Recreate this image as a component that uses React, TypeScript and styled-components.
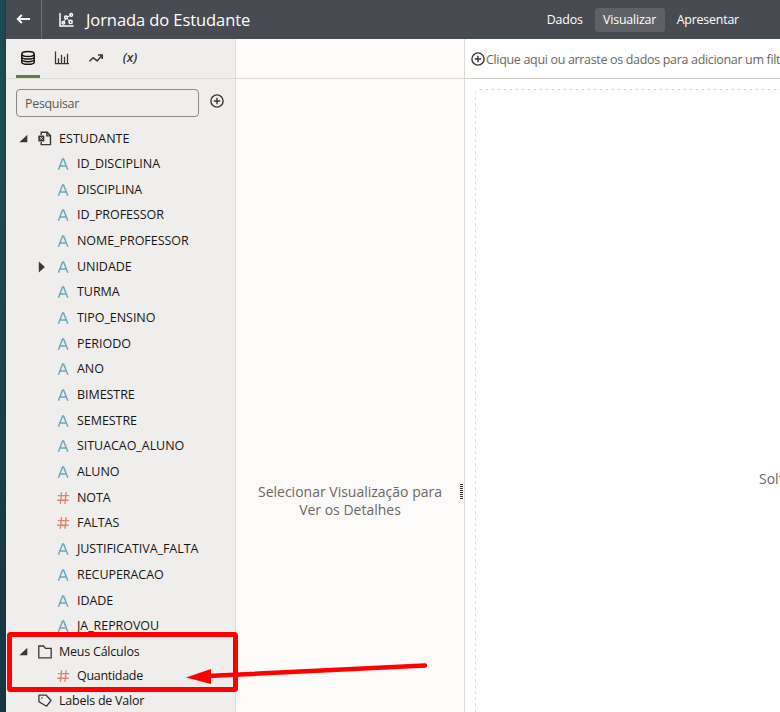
import React from 'react';
import styled, { createGlobalStyle } from 'styled-components';

const GlobalStyle = createGlobalStyle`
  *, *::before, *::after { box-sizing: border-box; }
  body { margin: 0; overflow: hidden; background: #fff; }
  svg { display: block; flex: none; }
`;

const Window = styled.div`
  position: relative;
  display: flex;
  width: 780px;
  height: 712px;
  overflow: hidden;
  font-family: "Open Sans", "Noto Sans", sans-serif;
  font-size: 12.5px;
  color: #161513;
  white-space: nowrap;
`;
const DesktopEdge = styled.div`
  flex: none;
  width: 6px;
  background: linear-gradient(90deg, transparent 4px, #15303a99 6px),
    linear-gradient(#1c4a50, #1f4c55 15%, #1b4049 60%, #17363f);
`;
const Shell = styled.div`
  flex: 1;
  min-width: 0;
  display: flex;
  flex-direction: column;
`;
const Header = styled.header`
  flex: none;
  display: flex;
  align-items: center;
  height: 39px;
  background: #494b53;
  color: #fff;
`;
const BackButton = styled.button`
  display: flex;
  align-items: center;
  width: 36px;
  height: 39px;
  padding: 0 0 1px 10px;
  border: 0;
  border-right: 1px solid #6c6e75;
  background: none;
  color: #fff;
`;
const Title = styled.h1`
  flex: 1;
  display: flex;
  align-items: center;
  gap: 12px;
  margin: 0;
  padding-left: 17px;
  font-size: 16.5px;
  font-weight: 400;
  letter-spacing: -0.08px;
  line-height: 39px;
`;
const ModeTabs = styled.nav`
  display: flex;
  gap: 4px;
  margin-right: 33px;
`;
const ModeTab = styled.button<{ $active?: boolean }>`
  height: 24px;
  padding: 0 8px;
  border: 0;
  border-radius: 3px;
  background: ${(p) => (p.$active ? '#5f6166' : 'transparent')};
  color: #fff;
  font: 500 12.4px/24px "Open Sans", "Noto Sans", sans-serif;
  letter-spacing: -0.19px;
  ${(p) => p.$active && 'width: 70px;'}
`;
const Body = styled.div`
  flex: 1;
  min-height: 0;
  display: flex;
`;
const DataPanel = styled.aside`
  flex: none;
  display: flex;
  flex-direction: column;
  width: 230px;
  border-right: 1px solid #dedcd9;
  background: #f0eeec;
`;
const PanelTabs = styled.div`
  flex: none;
  display: flex;
  gap: 10px;
  height: 40px;
  padding-left: 10px;
  border-bottom: 1px solid #dfddda;
`;
const PanelTab = styled.button<{ $active?: boolean }>`
  display: flex;
  justify-content: center;
  width: 24px;
  height: 39px;
  padding: 11px 0 0;
  border: 0;
  border-bottom: 3px solid ${(p) => (p.$active ? '#5f7d4f' : 'transparent')};
  background: none;
  color: ${(p) => (p.$active ? '#161513' : '#3a3632')};
`;
const Formula = styled.span`
  margin-top: -2px;
  font: italic 600 13px/18px "Open Sans", "Noto Sans", sans-serif;
`;
const SearchRow = styled.div`
  flex: none;
  display: flex;
  align-items: flex-start;
  gap: 11px;
  height: 47px;
  padding: 10px 0 0 10px;
`;
const SearchBox = styled.div`
  width: 183px;
  height: 28px;
  padding-left: 8px;
  border: 1px solid #8b8782;
  border-radius: 4px;
  color: #5b5753;
  line-height: 28px;
  letter-spacing: -0.33px;
`;
const AddButton = styled.button`
  padding: 5px 0 0;
  border: 0;
  background: none;
  color: #3a3632;
`;
const Tree = styled.div`
  flex: 1;
  min-height: 0;
  overflow: hidden;
`;
const GroupRow = styled.div<{ $tight?: boolean }>`
  display: grid;
  grid-template-columns: 22px 18px 1fr;
  align-items: center;
  height: 25px;
  padding-left: 13px;
  letter-spacing: ${(p) => (p.$tight ? '-0.23px' : '0.06px')};
`;
const GroupIcon = styled.span`
  margin-left: -3px;
`;
const Name = styled.span`
  line-height: 18px;
`;
const FieldRow = styled.div<{ $tight?: boolean }>`
  display: grid;
  grid-template-columns: 18px 20px 1fr;
  align-items: center;
  height: ${(p) => (p.$tight ? '24.6px' : '25.7px')};
  padding-left: 33px;
  letter-spacing: ${(p) => (p.$tight ? '-0.3px' : '-0.05px')};
`;
const ToggleSlot = styled.span`
  margin-left: -1px;
`;
const DetailsPanel = styled.section`
  flex: none;
  display: flex;
  flex-direction: column;
  width: 229px;
  border-right: 1px solid #dedcd9;
  background: #fcfbfa;
`;
const DetailsBar = styled.div`
  flex: none;
  height: 40px;
  border-bottom: 1px solid #dfddda;
`;
const DetailsContent = styled.div`
  flex: 1;
  display: flex;
  align-items: flex-start;
  padding-top: 404px;
`;
const DetailsHint = styled.p`
  flex: 1;
  margin: 0;
  text-align: center;
  font-size: 14px;
  line-height: 18px;
  color: #6b6762;
`;
const Gripper = styled.div`
  width: 3px;
  height: 15px;
  margin: 1px 1px 0 -4px;
  background: repeating-linear-gradient(#3a3632 0 1px, transparent 1px 2px);
`;
const Canvas = styled.main`
  flex: 1;
  min-width: 0;
  display: flex;
  flex-direction: column;
  background: #fff;
`;
const FilterBar = styled.div`
  flex: none;
  display: flex;
  align-items: center;
  gap: 1px;
  height: 40px;
  padding-left: 6px;
  border-bottom: 1px solid #d2cfc7;
  color: #6b6762;
  font-size: 12.5px;
  letter-spacing: -0.33px;
`;
const FilterIcon = styled.span`
  color: #3a3632;
`;
const FilterText = styled.span`
  padding-top: 2px;
`;
const DropZone = styled.div`
  flex: 1;
  margin: 10px -12px -12px 10px;
  overflow: hidden;
`;
const DropFrame = styled.svg`
  width: 317px;
  height: 635px;
`;
const DropHint = styled.div`
  margin: -255px 0 0 284px;
  font-size: 14px;
  line-height: 20px;
  color: #6b6762;
`;
const Annotation = styled.svg`
  position: absolute;
  left: 0;
  top: 0;
  pointer-events: none;
`;

const BackIcon = () => (
  <svg width="15" height="12" viewBox="0 0 15 12" fill="none" stroke="currentColor" strokeWidth="1.8">
    <path d="M14 6H1.8M5.8 2 1.7 6l4.1 4" />
  </svg>
);
const ScatterIcon = () => (
  <svg width="15" height="16" viewBox="0 0 15 16" fill="none" stroke="#fff" strokeWidth="1.5">
    <path d="M1 1v13H14.6" />
    <path d="m4.6 10.6 2.2-4M8.3 6.6l2.4 2.8M8.4 5 11 3.6" strokeWidth="1" />
    <circle cx="4.4" cy="10.8" r="1.3" />
    <circle cx="7" cy="5.4" r="1.4" />
    <circle cx="12.2" cy="2.9" r="1.3" />
    <circle cx="11.6" cy="9.9" r="1.6" />
  </svg>
);
const DatabaseIcon = () => (
  <svg width="16" height="16" viewBox="0 0 16 16" fill="none" stroke="currentColor" strokeWidth="1.5">
    <ellipse cx="8" cy="4.1" rx="6.2" ry="2.5" />
    <path d="M1.8 4.1v7.8c0 1.4 2.8 2.4 6.2 2.4s6.2-1 6.2-2.4V4.1M1.8 6.7C1.8 8 4.6 9.1 8 9.1s6.2-1.1 6.2-2.4M1.8 9.3c0 1.3 2.8 2.4 6.2 2.4s6.2-1.1 6.2-2.4" />
  </svg>
);
const BarsIcon = () => (
  <svg width="16" height="16" viewBox="0 0 16 16" fill="none" stroke="currentColor" strokeWidth="1.3">
    <path d="M1.5 1.4v12.3H15M4.5 14V8.2M7.5 14V4.8M10.5 14V6.8M13.5 14V3.8" />
  </svg>
);
const TrendIcon = () => (
  <svg width="16" height="16" viewBox="0 0 16 16" fill="none" stroke="currentColor" strokeWidth="1.5">
    <path d="m1.5 11.2 3.7-3.5 4 3.2L14 5.2M10 5h4.2v4" />
  </svg>
);
const CirclePlus = () => (
  <svg width="14" height="14" viewBox="0 0 14 14" fill="none" stroke="currentColor" strokeWidth="1.4">
    <circle cx="7" cy="7" r="6.1" />
    <path d="M7 3.8v6.4M3.8 7h6.4" />
  </svg>
);
const ExpandedIcon = () => (
  <svg width="9" height="9" viewBox="0 0 9 9" fill="#3a3632"><path d="M8.3.7v7.6H.4z" /></svg>
);
const CollapsedIcon = () => (
  <svg width="8" height="12" viewBox="0 0 8 12" fill="#3a3632"><path d="M.8.6 6.9 6 .8 11.4z" /></svg>
);
const ExcelFileIcon = () => (
  <svg width="14" height="15" viewBox="0 0 14 15" fill="none" stroke="#3a3632" strokeWidth="1.4">
    <path d="M3.2 4V1.3h6l3.3 3.3v9H3.2V11M8.9 1.5v3.4h3.5" />
    <rect x=".3" y="4.4" width="6" height="6" rx=".5" fill="#3a3632" stroke="none" />
    <path d="m2 6.1 2.6 2.6M4.6 6.1 2 8.7" stroke="#f0eeec" strokeWidth=".9" />
  </svg>
);
const FolderIcon = () => (
  <svg width="14" height="14" viewBox="0 0 14 14" fill="none" stroke="#3a3632" strokeWidth="1.3">
    <path d="M.8 12.8V1h4.7l2 2.4h5.7v9.4z" />
  </svg>
);
const TagIcon = () => (
  <svg width="14" height="14" viewBox="0 0 14 14" fill="none" stroke="#3a3632" strokeWidth="1.3">
    <path d="M.9 1.2h7.3L13 6.5l-4.4 5.7L.9 7.8z" strokeLinejoin="round" />
    <circle cx="4" cy="4" r=".8" fill="#3a3632" stroke="none" />
  </svg>
);
const AttributeIcon = () => (
  <svg width="13" height="12" viewBox="0 0 13 12" fill="none" stroke="#6fa5bd" strokeWidth="1.5">
    <path d="M1.4 11.7 5.6.9h1l4.2 10.8M2.8 8.1h6.6" />
  </svg>
);
const MeasureIcon = () => (
  <svg width="13" height="12" viewBox="0 0 13 12" fill="none" stroke="#e0826f" strokeWidth="1.35">
    <path d="M4.6.1 3.3 11.9M9.2.1 7.9 11.9M.8 3.6h11.4M.2 8.2h11.4" />
  </svg>
);

type Field = { name: string; measure?: boolean; expandable?: boolean };
const fields: Field[] = [
  { name: 'ID_DISCIPLINA' },
  { name: 'DISCIPLINA' },
  { name: 'ID_PROFESSOR' },
  { name: 'NOME_PROFESSOR' },
  { name: 'UNIDADE', expandable: true },
  { name: 'TURMA' },
  { name: 'TIPO_ENSINO' },
  { name: 'PERIODO' },
  { name: 'ANO' },
  { name: 'BIMESTRE' },
  { name: 'SEMESTRE' },
  { name: 'SITUACAO_ALUNO' },
  { name: 'ALUNO' },
  { name: 'NOTA', measure: true },
  { name: 'FALTAS', measure: true },
  { name: 'JUSTIFICATIVA_FALTA' },
  { name: 'RECUPERACAO' },
  { name: 'IDADE' },
  { name: 'JA_REPROVOU' },
];

const FieldItem = ({ name, measure, expandable, tight }: Field & { tight?: boolean }) => (
  <FieldRow $tight={tight}>
    <ToggleSlot>{expandable && <CollapsedIcon />}</ToggleSlot>
    {measure ? <MeasureIcon /> : <AttributeIcon />}
    <Name>{name}</Name>
  </FieldRow>
);

export default function App() {
  return (
    <Window>
      <GlobalStyle />
      <DesktopEdge />
      <Shell>
        <Header>
          <BackButton aria-label="Voltar"><BackIcon /></BackButton>
          <Title><ScatterIcon />Jornada do Estudante</Title>
          <ModeTabs>
            <ModeTab>Dados</ModeTab>
            <ModeTab $active>Visualizar</ModeTab>
            <ModeTab>Apresentar</ModeTab>
          </ModeTabs>
        </Header>
        <Body>
          <DataPanel>
            <PanelTabs>
              <PanelTab $active><DatabaseIcon /></PanelTab>
              <PanelTab><BarsIcon /></PanelTab>
              <PanelTab><TrendIcon /></PanelTab>
              <PanelTab><Formula>(x)</Formula></PanelTab>
            </PanelTabs>
            <SearchRow>
              <SearchBox>Pesquisar</SearchBox>
              <AddButton aria-label="Adicionar"><CirclePlus /></AddButton>
            </SearchRow>
            <Tree>
              <GroupRow>
                <ExpandedIcon />
                <GroupIcon><ExcelFileIcon /></GroupIcon>
                <Name>ESTUDANTE</Name>
              </GroupRow>
              {fields.map((f) => <FieldItem key={f.name} {...f} />)}
              <GroupRow $tight>
                <ExpandedIcon />
                <GroupIcon><FolderIcon /></GroupIcon>
                <Name>Meus Cálculos</Name>
              </GroupRow>
              <FieldItem name="Quantidade" measure tight />
              <GroupRow $tight>
                <span />
                <GroupIcon><TagIcon /></GroupIcon>
                <Name>Labels de Valor</Name>
              </GroupRow>
            </Tree>
          </DataPanel>
          <DetailsPanel>
            <DetailsBar />
            <DetailsContent>
              <DetailsHint>Selecionar Visualização para<br />Ver os Detalhes</DetailsHint>
              <Gripper />
            </DetailsContent>
          </DetailsPanel>
          <Canvas>
            <FilterBar>
              <FilterIcon><CirclePlus /></FilterIcon>
              <FilterText>Clique aqui ou arraste os dados para adicionar um filtro</FilterText>
            </FilterBar>
            <DropZone>
              <DropFrame>
                <rect x=".5" y=".5" width="340" height="660" rx="4" fill="none" stroke="#d8d6d3" strokeDasharray="2.5 3.5" />
              </DropFrame>
              <DropHint>Solte Visualizações ou Dados Aqui</DropHint>
            </DropZone>
          </Canvas>
        </Body>
      </Shell>
      <Annotation width="780" height="712" viewBox="0 0 780 712" fill="none" stroke="#f00">
        <rect x="9.5" y="634.5" width="226" height="55" rx="1" strokeWidth="5" />
        <path d="M425 665.5 208 676" strokeWidth="4.4" strokeLinecap="round" />
        <path d="m186 677.5 25-8.5v15z" fill="#f00" stroke="none" />
      </Annotation>
    </Window>
  );
}
